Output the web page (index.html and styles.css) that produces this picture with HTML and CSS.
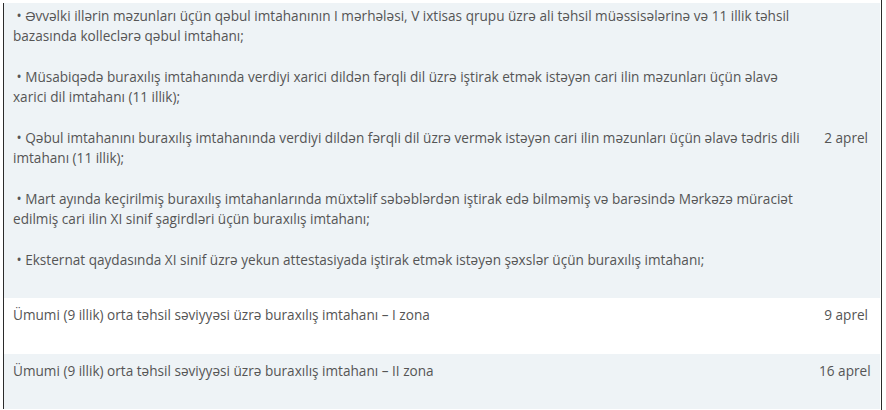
FILE: index.html
```html
<!DOCTYPE html>
<html lang="az">
<head>
  <meta charset="UTF-8">
  <title>İmtahan təqvimi</title>
  <meta name="viewport" content="width=device-width, initial-scale=1.0">
  <link rel="stylesheet" href="styles.css">
</head>
<body>
  <div class="cerceve">
    <table class="teqvim">
      <tr class="boz">
        <td class="ad">
          <p>&nbsp;• Əvvəlki illərin məzunları üçün qəbul imtahanının I mərhələsi, V ixtisas qrupu üzrə ali təhsil müəssisələrinə və 11 illik təhsil bazasında kolleclərə qəbul imtahanı;</p>
          <p>&nbsp;• Müsabiqədə buraxılış imtahanında verdiyi xarici dildən fərqli dil üzrə iştirak etmək istəyən cari ilin məzunları üçün əlavə xarici dil imtahanı (11 illik);</p>
          <p>&nbsp;• Qəbul imtahanını buraxılış imtahanında verdiyi dildən fərqli dil üzrə vermək istəyən cari ilin məzunları üçün əlavə tədris dili imtahanı (11 illik);</p>
          <p>&nbsp;• Mart ayında keçirilmiş buraxılış imtahanlarında müxtəlif səbəblərdən iştirak edə bilməmiş və barəsində Mərkəzə müraciət edilmiş cari ilin XI sinif şagirdləri üçün buraxılış imtahanı;</p>
          <p>&nbsp;• Eksternat qaydasında XI sinif üzrə yekun attestasiyada iştirak etmək istəyən şəxslər üçün buraxılış imtahanı;</p>
        </td>
        <td class="tarix orta"><p>2 aprel</p></td>
      </tr>
      <tr class="ag">
        <td class="ad"><p>Ümumi (9 illik) orta təhsil səviyyəsi üzrə buraxılış imtahanı – I zona</p></td>
        <td class="tarix"><p>9 aprel</p></td>
      </tr>
      <tr class="boz">
        <td class="ad"><p>Ümumi (9 illik) orta təhsil səviyyəsi üzrə buraxılış imtahanı – II zona</p></td>
        <td class="tarix"><p>16 aprel</p></td>
      </tr>
    </table>
  </div>
</body>
</html>
```

FILE: styles.css
```css
body {
  margin: 0;
  background: #fff;
  font-family: "Open Sans", sans-serif;
  font-size: 13.6px;
  color: #555;
}
.cerceve {
  margin-left: 3px;
  width: 878px;
  height: 410px;
  border-right: 1px solid #2b2b2b;
  overflow: hidden;
}
.teqvim {
  margin-top: 3px;
  width: 877px;
  table-layout: fixed;
  border-collapse: collapse;
  border-left: 1px solid #2b2b2b;
}
.teqvim td {
  padding: 7px 8px 8px 9px;
  vertical-align: top;
}
.boz {
  background: #eef3f6;
}
.ag {
  background: #fff;
}
.teqvim tr:first-child td {
  padding-top: 3px;
}
.teqvim p {
  margin: 0 0 20.3px;
  line-height: 20.3px;
}
.tarix {
  width: 49px;
  text-align: right;
  white-space: nowrap;
}
.teqvim td.tarix {
  padding-right: 11px;
}
.teqvim td.orta {
  vertical-align: middle;
  padding-top: 8px;
}
```
